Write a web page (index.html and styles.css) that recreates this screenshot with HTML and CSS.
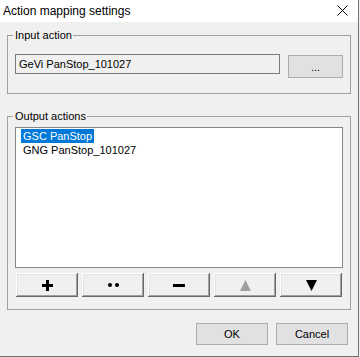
FILE: index.html
```html
<!DOCTYPE html>
<html lang="en">
  <head>
    <meta charset="UTF-8" />
    <title>Action mapping settings</title>
    <link rel="stylesheet" href="styles.css">
  </head>
  <body>
    <div class="window">
      <div class="titlebar">
        <span class="title">Action mapping settings</span>
        <svg class="close-icon" width="11" height="11" viewBox="0 0 11 11">
          <path d="M0.5 0.5 L10.5 10.5 M10.5 0.5 L0.5 10.5" stroke="#000" stroke-width="1" fill="none" />
        </svg>
      </div>

      <div class="content">
        <div class="group">
          <div class="group-title">Input action</div>
          <div class="input-row">
            <div class="textbox">GeVi PanStop_101027</div>
            <button class="push-button browse-button" type="button">...</button>
          </div>
        </div>

        <div class="group group-output">
          <div class="group-title">Output actions</div>
          <ul class="listbox">
            <li class="list-item selected">GSC PanStop</li>
            <li class="list-item">GNG PanStop_101027</li>
          </ul>
          <div class="tool-row">
            <button class="tool-button" type="button" title="Add">
              <svg width="11" height="11" viewBox="0 0 11 11">
                <rect x="0" y="4" width="11" height="3" fill="#000" />
                <rect x="4" y="0" width="3" height="11" fill="#000" />
              </svg>
            </button>
            <button class="tool-button" type="button" title="Edit">
              <svg width="11" height="4" viewBox="0 0 11 4">
                <circle cx="2" cy="2" r="2" fill="#000" />
                <circle cx="9" cy="2" r="2" fill="#000" />
              </svg>
            </button>
            <button class="tool-button" type="button" title="Remove">
              <svg width="12" height="3" viewBox="0 0 12 3">
                <rect x="0" y="0" width="12" height="3" fill="#000" />
              </svg>
            </button>
            <button class="tool-button" type="button" title="Move up" disabled>
              <svg width="11" height="11" viewBox="0 0 11 11">
                <polygon points="5.5,0 11,11 0,11" fill="#a0a0a0" />
              </svg>
            </button>
            <button class="tool-button" type="button" title="Move down">
              <svg width="11" height="11" viewBox="0 0 11 11">
                <polygon points="0,0 11,0 5.5,11" fill="#000" />
              </svg>
            </button>
          </div>
        </div>

        <div class="dialog-buttons">
          <button class="push-button dialog-button" type="button">OK</button>
          <button class="push-button dialog-button" type="button">Cancel</button>
        </div>
      </div>
    </div>
  </body>
</html>
```

FILE: styles.css
```css
body,
html {
  margin: 0;
  padding: 0;
  font-family: "Liberation Sans", Arial, sans-serif;
  font-size: 11px;
  color: #000000;
  background-color: #f0f0f0;
}

.window {
  box-sizing: border-box;
  width: 359px;
  height: 357px;
  background-color: #f0f0f0;
  border-right: 1px solid #707070;
  border-bottom: 1px solid #707070;
}

.titlebar {
  display: flex;
  align-items: center;
  height: 22px;
  padding-left: 3px;
  background-color: #ffffff;
}

.title {
  font-size: 12px;
  line-height: 14px;
}

.close-icon {
  margin-left: auto;
  margin-right: 10px;
  margin-top: -1px;
}

.content {
  padding: 13px 7px 0 7px;
}

.group {
  border: 1px solid #a0a0a0;
  padding: 0 7px 15px 7px;
}

.group-output {
  margin-top: 22px;
  padding-bottom: 12px;
}

.group-title {
  width: fit-content;
  margin: -8px 0 0 -2px;
  padding: 0 1px 0 2px;
  line-height: 14px;
  background-color: #f0f0f0;
}

.input-row {
  display: flex;
  align-items: flex-start;
  gap: 8px;
  margin-top: 12px;
  height: 24px;
}

.textbox {
  box-sizing: border-box;
  width: 265px;
  height: 20px;
  padding: 0 3px;
  line-height: 18px;
  border: 1px solid #7a7a7a;
  background-color: #f0f0f0;
}

.push-button {
  box-sizing: border-box;
  font-family: "Liberation Sans", Arial, sans-serif;
  font-size: 11px;
  color: #000000;
  background-color: #e1e1e1;
  border: 1px solid #adadad;
  padding: 0;
}

.browse-button {
  width: 55px;
  height: 23px;
  margin-top: 1px;
}

.listbox {
  box-sizing: border-box;
  list-style: none;
  margin: 4px 0 0 0;
  padding: 1px 0 0 5px;
  height: 141px;
  background-color: #ffffff;
  border: 1px solid #828790;
}

.list-item {
  width: fit-content;
  padding: 0 2px;
  line-height: 14px;
}

.list-item.selected {
  background-color: #0078d7;
  color: #ffffff;
}

.tool-row {
  display: flex;
  gap: 4px;
  margin: 5px 1px 0 1px;
}

.tool-button {
  display: flex;
  align-items: center;
  justify-content: center;
  width: 62px;
  height: 24px;
  padding: 0;
  border: none;
  background-color: #f0f0f0;
  box-shadow: inset -1px -1px #696969, inset 1px 1px #ffffff,
    inset -2px -2px #a0a0a0, inset 2px 2px #e3e3e3;
}

.dialog-buttons {
  display: flex;
  justify-content: flex-end;
  gap: 8px;
  margin: 13px 3px 0 0;
}

.dialog-button {
  width: 72px;
  height: 22px;
}
```
